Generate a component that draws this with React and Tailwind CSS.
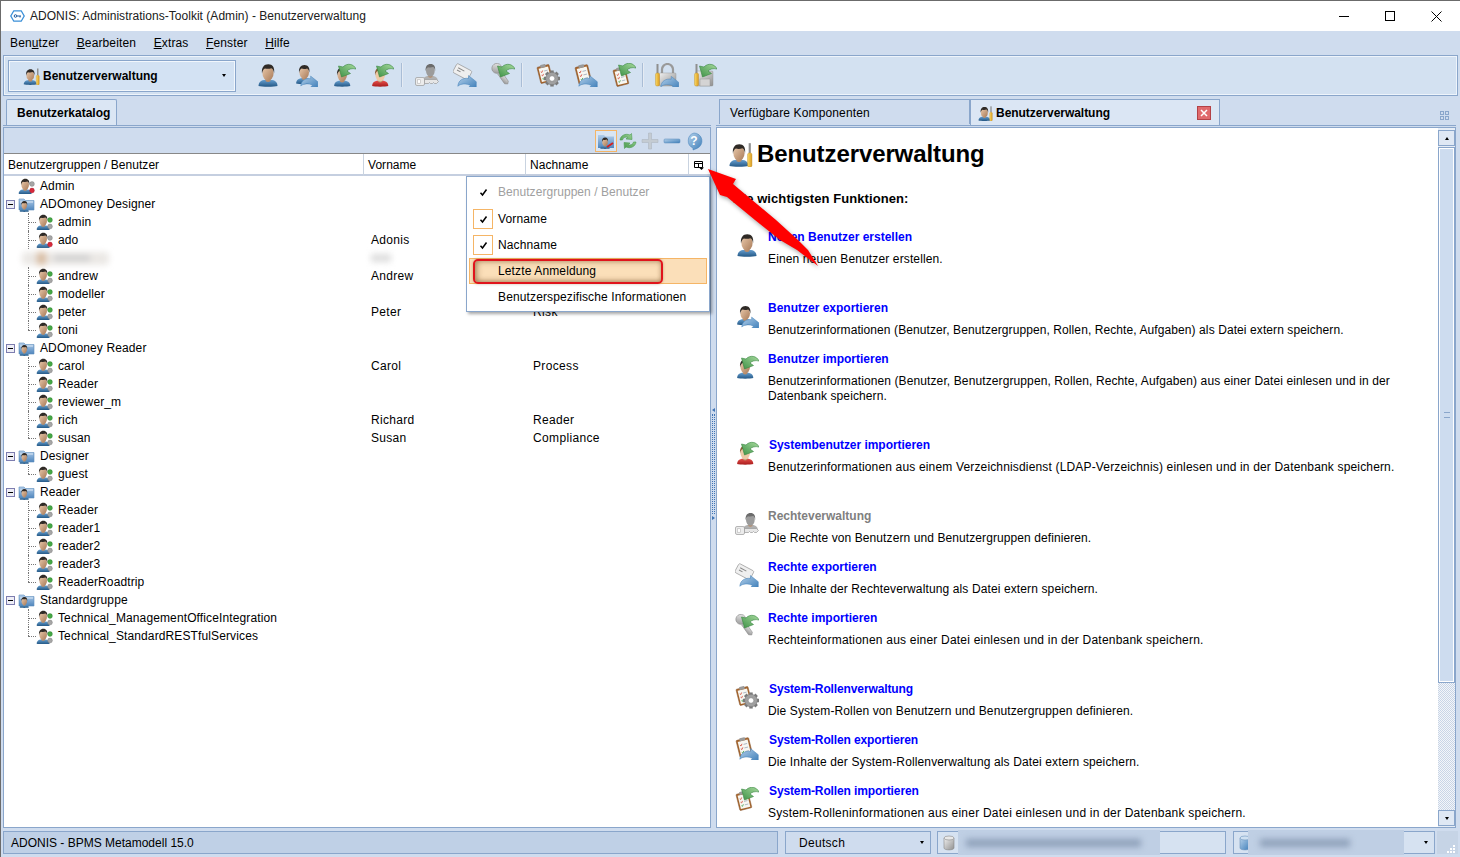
// App.jsx
import React from "react";

const FONT = "font-['Liberation_Sans',Arial,sans-serif]";

function Defs() {
  return (
    <svg width="0" height="0" className="absolute">
      <defs>
        <linearGradient id="skin" x1="0" y1="0" x2="1" y2="1">
          <stop offset="0" stopColor="#ecccae" />
          <stop offset="1" stopColor="#a87a58" />
        </linearGradient>
        <linearGradient id="shirtBlue" x1="0" y1="0" x2="0" y2="1">
          <stop offset="0" stopColor="#6aa2d2" />
          <stop offset="1" stopColor="#235785" />
        </linearGradient>
        <linearGradient id="shirtRed" x1="0" y1="0" x2="0" y2="1">
          <stop offset="0" stopColor="#e8504c" />
          <stop offset="1" stopColor="#a81c1c" />
        </linearGradient>
        <linearGradient id="green" x1="1" y1="0" x2="0" y2="1">
          <stop offset="0" stopColor="#a6d99c" />
          <stop offset="1" stopColor="#3d9146" />
        </linearGradient>
        <linearGradient id="blueArrow" x1="0" y1="0" x2="1" y2="1">
          <stop offset="0" stopColor="#b4d0ea" />
          <stop offset="1" stopColor="#3f7fb9" />
        </linearGradient>
        <linearGradient id="steel" x1="0" y1="0" x2="1" y2="1">
          <stop offset="0" stopColor="#f0f0f0" />
          <stop offset="1" stopColor="#909090" />
        </linearGradient>
        <linearGradient id="yellow" x1="0" y1="0" x2="1" y2="0">
          <stop offset="0" stopColor="#f9da68" />
          <stop offset="1" stopColor="#dc9c20" />
        </linearGradient>
        <linearGradient id="folder" x1="0" y1="0" x2="0" y2="1">
          <stop offset="0" stopColor="#b2cdea" />
          <stop offset="1" stopColor="#4f86bd" />
        </linearGradient>
      </defs>
    </svg>
  );
}

// head and shoulders, drawn in a 24 box
function Bust({ shirt = "url(#shirtBlue)", hair = "#2f2a26", skin = "url(#skin)", x = 0, y = 0, k = 1 }) {
  return (
    <g transform={`translate(${x} ${y}) scale(${k})`}>
      <path d="M2.500 23c0-4.500 3.500-6.500 9.500-6.500s9.500 2 9.500 6.500c-3 1-16 1-19 0z" fill={shirt} />
      <path d="M9.500 14h5v4c-1.500 1.200-3.500 1.200-5 0z" fill="#b98c68" />
      <ellipse cx="12" cy="10" rx="5.600" ry="7.600" fill={skin} />
      <path d="M6 10.500C5.200 4.500 8 1.200 12.300 1.200c4.200 0 6.600 3.200 5.800 9-.4-2.600-1.200-4.200-2.600-5-2.200.8-5 .8-6.600.2C7.200 6.300 6.400 8 6 10.500z" fill={hair} />
    </g>
  );
}

function GreenArrow({ x = 0, y = 0, k = 1 }) {
  return (
    <path
      transform={`translate(${x} ${y}) scale(${k})`}
      d="M24 6C22 1 15-.5 11 4L6.500 3 9.500 14 18.500 10.500 15 8C17 6 20 5 24 6z"
      fill="url(#green)"
      stroke="#37873f"
      strokeWidth=".6"
    />
  );
}

function BlueArrow({ x = 0, y = 0, k = 1 }) {
  return (
    <path
      transform={`translate(${x} ${y}) scale(${k})`}
      d="M1 21C1.500 14 7 10.500 14 11.500V8L23.500 15.500 23.500 23.500H13L16.500 20C11 17.500 5 17.500 1 21z"
      fill="url(#blueArrow)"
      stroke="#3f7fb9"
      strokeWidth=".6"
    />
  );
}

function Clipboard({ x = 0, y = 0, k = 1 }) {
  return (
    <g transform={`translate(${x} ${y}) scale(${k}) rotate(-14 10 12)`}>
      <rect x="3" y="3" width="14" height="19" rx="1" fill="#a8672f" stroke="#7c4a20" strokeWidth=".5" />
      <rect x="4.500" y="5" width="11" height="15.500" fill="#f7f7f2" />
      <rect x="7" y="1.500" width="6" height="3.500" rx=".6" fill="#9a9a9a" />
      <path d="M6 9l1 1 1.500-2M6 13l1 1 1.500-2" fill="none" stroke="#d04030" strokeWidth=".8" />
      <path d="M6 17l1 1 1.500-2" fill="none" stroke="#3a9a40" strokeWidth=".8" />
      <path d="M10 9h4M10 13h4M10 17h4" stroke="#9aa7b8" strokeWidth=".8" />
    </g>
  );
}

function Gear({ x = 0, y = 0, k = 1 }) {
  const teeth = [0, 45, 90, 135];
  return (
    <g transform={`translate(${x} ${y}) scale(${k})`}>
      {teeth.map((a) => (
        <rect key={a} x="-1.500" y="-7" width="3" height="14" fill="#7b7b7b" transform={`rotate(${a})`} />
      ))}
      <circle r="5.500" fill="#a0a0a0" stroke="#6f6f6f" strokeWidth=".4" />
      <circle r="2.400" fill="#fff" stroke="#6f6f6f" strokeWidth=".4" />
    </g>
  );
}

function Padlock({ x = 0, y = 0 }) {
  return (
    <g transform={`translate(${x} ${y})`}>
      <path d="M6 11V6.500a5.500 5.500 0 0 1 11 0V11" fill="none" stroke="#9a9a9a" strokeWidth="2.200" />
      <rect x="3" y="10" width="17" height="13" rx="1" fill="url(#steel)" stroke="#8d8d8d" strokeWidth=".4" />
    </g>
  );
}

function Screwdriver({ x = 0, y = 0 }) {
  return (
    <g transform={`translate(${x} ${y})`}>
      <rect x="1.500" y="0" width="2" height="9" fill="#8f8f8f" />
      <rect x=".500" y="9" width="4" height="13" rx="1.500" fill="url(#yellow)" stroke="#b9861e" strokeWidth=".4" />
    </g>
  );
}

function Ico({ size = 24, children, className = "" }) {
  return (
    <svg width={size} height={size} viewBox="0 0 24 24" className={`shrink-0 ${className}`}>
      {children}
    </svg>
  );
}

const UserIcon = ({ size }) => (
  <Ico size={size}>
    <Bust />
  </Ico>
);
const UserExportIcon = ({ size }) => (
  <Ico size={size}>
    <Bust k={0.85} x={0} y={1} />
    <BlueArrow x={6} y={7} k={0.76} />
  </Ico>
);
const UserImportIcon = ({ size }) => (
  <Ico size={size}>
    <Bust k={0.85} x={0} y={3.500} />
    <GreenArrow x={0} y={0} k={1} />
  </Ico>
);
const SysUserImportIcon = ({ size }) => (
  <Ico size={size}>
    <Bust k={0.85} x={0} y={3.500} shirt="url(#shirtRed)" hair="#8a5a34" skin="#edc9a6" />
    <GreenArrow x={0} y={0} k={1} />
  </Ico>
);
const RightsIcon = ({ size }) => (
  <Ico size={size}>
    <Bust x={6} y={0} k={0.78} shirt="#b0b0b0" hair="#6b6b6b" skin="#9c9c9c" />
    <rect x=".500" y="14.500" width="9" height="8" rx="1.500" fill="#ececec" stroke="#9a9a9a" strokeWidth=".7" />
    <rect x="2.500" y="16.800" width="3" height="3.400" fill="#fff" stroke="#aaa" strokeWidth=".5" />
    <path d="M9.500 16.500h12l2 2-2 2h-2l-1-1-1 1h-2l-1-1-1 1h-4z" fill="#e6e6e6" stroke="#9a9a9a" strokeWidth=".7" />
  </Ico>
);
const TagExportIcon = ({ size }) => (
  <Ico size={size}>
    <g transform="rotate(28 8 8)">
      <rect x="1" y="3" width="17" height="10" rx="1.500" fill="#efefef" stroke="#8d8d8d" strokeWidth=".6" />
      <path d="M4 6.500h7M4 9h4" stroke="#888" strokeWidth="1" />
    </g>
    <BlueArrow x={4} y={6} k={0.82} />
  </Ico>
);
const KeyImportIcon = ({ size }) => (
  <Ico size={size}>
    <g transform="rotate(55 7 7)">
      <circle cx="5" cy="7" r="5" fill="url(#steel)" stroke="#8d8d8d" strokeWidth=".6" />
      <path d="M10 5h12l2 2-2 2.500H10z" fill="url(#steel)" stroke="#8d8d8d" strokeWidth=".6" />
    </g>
    <GreenArrow x={0} y={0} k={1} />
  </Ico>
);
const RoleIcon = ({ size }) => (
  <Ico size={size}>
    <Clipboard x={0} y={0} k={0.88} />
    <Gear x={16} y={15.500} k={1.150} />
  </Ico>
);
const RoleExportIcon = ({ size }) => (
  <Ico size={size}>
    <Clipboard x={0} y={0} k={0.92} />
    <BlueArrow x={4} y={6} k={0.82} />
  </Ico>
);
const RoleImportIcon = ({ size }) => (
  <Ico size={size}>
    <Clipboard x={0} y={3} k={0.88} />
    <GreenArrow x={0} y={-1} k={1} />
  </Ico>
);
const LockExportIcon = ({ size }) => (
  <Ico size={size}>
    <Padlock x={1} y={0} />
    <Screwdriver x={0} y={1} />
    <BlueArrow x={5} y={7} k={0.8} />
  </Ico>
);
const LockImportIcon = ({ size }) => (
  <Ico size={size}>
    <rect x="3" y="8" width="17" height="15" rx="1" fill="url(#steel)" stroke="#8d8d8d" strokeWidth=".4" />
    <rect x="7" y="16" width="10" height="7" fill="#d4d4d4" stroke="#8d8d8d" strokeWidth=".4" />
    <Screwdriver x={1} y={1} />
    <GreenArrow x={0} y={0} k={1} />
  </Ico>
);
const AdminIcon = ({ size }) => (
  <Ico size={size}>
    <Bust k={0.92} x={0} y={2} />
    <Screwdriver x={18.500} y={2} />
  </Ico>
);

// the small tree icon with its two status dots
function TreeUser({ admin }) {
  return (
    <svg width="18" height="16" viewBox="0 0 18 16" className="shrink-0">
      <g transform="translate(-1 0) scale(.68)">
        <Bust />
      </g>
      <circle cx="14" cy="6" r="2.400" fill={admin ? "#a6a6a6" : "#45a845"} stroke={admin ? "#777" : "#2c7c2c"} strokeWidth=".4" />
      <circle cx="14" cy="12.500" r="2.400" fill={admin ? "#d8283a" : "#a6a6a6"} stroke={admin ? "#9c1a28" : "#777"} strokeWidth=".4" />
    </svg>
  );
}

function TreeGroup() {
  return (
    <svg width="17" height="16" viewBox="0 0 17 16" className="shrink-0">
      <path d="M1 3h5l1.500 1.500H16v9.500H1z" fill="url(#folder)" stroke="#5f8fbe" strokeWidth=".6" />
      <path d="M2 6h13" stroke="#dbe8f6" strokeWidth="1" />
      <g transform="translate(.5 4.500) scale(.48)">
        <Bust />
      </g>
    </svg>
  );
}

const TREE = [
  { t: "u", n: "Admin", admin: true },
  { t: "g", n: "ADOmoney Designer" },
  { t: "c", n: "admin" },
  { t: "c", n: "ado", v: "Adonis", admin: true },
  { t: "b" },
  { t: "c", n: "andrew", v: "Andrew" },
  { t: "c", n: "modeller" },
  { t: "c", n: "peter", v: "Peter", s: "Risk" },
  { t: "c", n: "toni", last: true },
  { t: "g", n: "ADOmoney Reader" },
  { t: "c", n: "carol", v: "Carol", s: "Process" },
  { t: "c", n: "Reader" },
  { t: "c", n: "reviewer_m" },
  { t: "c", n: "rich", v: "Richard", s: "Reader" },
  { t: "c", n: "susan", v: "Susan", s: "Compliance", last: true },
  { t: "g", n: "Designer" },
  { t: "c", n: "guest", last: true },
  { t: "g", n: "Reader" },
  { t: "c", n: "Reader" },
  { t: "c", n: "reader1" },
  { t: "c", n: "reader2" },
  { t: "c", n: "reader3" },
  { t: "c", n: "ReaderRoadtrip", last: true },
  { t: "g", n: "Standardgruppe" },
  { t: "c", n: "Technical_ManagementOfficeIntegration" },
  { t: "c", n: "Technical_StandardRESTfulServices", last: true },
];

function Connector({ last }) {
  return (
    <span className="relative w-[18px] h-[18px] shrink-0">
      <span className={`absolute left-[10px] top-0 w-0 border-l border-dotted border-[#777] ${last ? "h-[9px]" : "h-[18px]"}`} />
      <span className="absolute left-[10px] top-[9px] w-[8px] h-0 border-t border-dotted border-[#777]" />
    </span>
  );
}

function TreeRow({ row }) {
  if (row.t === "b") {
    return (
      <div className="h-[18px] flex items-center relative">
        <div className="ml-[18px] w-[87px] h-[13px] bg-[#ebe8e5] blur-[3px] rounded-sm flex items-center pl-[15px]">
          <div className="w-[9px] h-[13px] bg-[#d9bda3]" />
          <div className="ml-[8px] w-[36px] h-[6px] bg-[#d0d0d0]" />
        </div>
        <div className="absolute left-[367px] top-[5px] w-[20px] h-[8px] bg-[#dddddd] blur-[3px]" />
      </div>
    );
  }
  return (
    <div className="h-[18px] flex items-center relative tracking-[0.12px]">
      {row.t === "g" && (
        <>
          <span className="w-[14px] flex justify-start pl-[2px] shrink-0">
            <span className="w-[9px] h-[9px] border border-[#7d7daf] bg-[#eeeef6] flex items-center justify-center shrink-0">
              <span className="w-[5px] h-px bg-black" />
            </span>
          </span>
          <TreeGroup />
          <span className="ml-[5px]">{row.n}</span>
        </>
      )}
      {row.t === "u" && (
        <>
          <span className="w-[14px] shrink-0" />
          <TreeUser admin={row.admin} />
          <span className="ml-[4px]">{row.n}</span>
        </>
      )}
      {row.t === "c" && (
        <>
          <span className="w-[14px] shrink-0" />
          <Connector last={row.last} />
          <TreeUser admin={row.admin} />
          <span className="ml-[4px]">{row.n}</span>
        </>
      )}
      {row.v && <span className="absolute left-[367px] tracking-[0.3px]">{row.v}</span>}
      {row.s && <span className="absolute left-[529px] tracking-[0.35px]">{row.s}</span>}
    </div>
  );
}

const HELP = [
  { I: UserIcon, t: "Neuen Benutzer erstellen", d: "Einen neuen Benutzer erstellen.", gap: true, tr: "tracking-[0.13px]" },
  { I: UserExportIcon, t: "Benutzer exportieren", d: "Benutzerinformationen (Benutzer, Benutzergruppen, Rollen, Rechte, Aufgaben) als Datei extern speichern.", tr: "tracking-[0.09px]" },
  { I: UserImportIcon, t: "Benutzer importieren", d: "Benutzerinformationen (Benutzer, Benutzergruppen, Rollen, Rechte, Aufgaben) aus einer Datei einlesen und in der Datenbank speichern.", gap: true, tr: "tracking-[0.11px]" },
  { I: SysUserImportIcon, t: "Systembenutzer importieren", d: "Benutzerinformationen aus einem Verzeichnisdienst (LDAP-Verzeichnis) einlesen und in der Datenbank speichern.", gap: true, wide: "tracking-[-0.04px]", tr: "tracking-[0.16px]" },
  { I: RightsIcon, t: "Rechteverwaltung", d: "Die Rechte von Benutzern und Benutzergruppen definieren.", off: true, tr: "tracking-[0.09px]" },
  { I: TagExportIcon, t: "Rechte exportieren", d: "Die Inhalte der Rechteverwaltung als Datei extern speichern.", tr: "tracking-[0.12px]" },
  { I: KeyImportIcon, t: "Rechte importieren", d: "Rechteinformationen aus einer Datei einlesen und in der Datenbank speichern.", gap: true, tr: "tracking-[0.21px]" },
  { I: RoleIcon, t: "System-Rollenverwaltung", d: "Die System-Rollen von Benutzern und Benutzergruppen definieren.", wide: "tracking-[-0.12px]", tr: "tracking-[0.11px]" },
  { I: RoleExportIcon, t: "System-Rollen exportieren", d: "Die Inhalte der System-Rollenverwaltung als Datei extern speichern.", wide: "tracking-[-0.12px]", tr: "tracking-[0.13px]" },
  { I: RoleImportIcon, t: "System-Rollen importieren", d: "System-Rolleninformationen aus einer Datei einlesen und in der Datenbank speichern.", wide: "tracking-[-0.12px]", tr: "tracking-[0.22px]" },
];

function HelpItem({ item }) {
  const { I } = item;
  return (
    <div className={`flex ${item.gap ? "mb-5" : ""}`}>
      <div className="w-[41px] shrink-0 pt-[3px] pl-[8px]">
        <I size={24} />
      </div>
      <div className="flex-1 pb-[14px]">
        <div className={`h-[15px] leading-[15px] font-bold ${item.wide ? `ml-px ${item.wide}` : ""} ${item.off ? "text-[#808080]" : "text-[#0000ff]"}`}>{item.t}</div>
        <div className={`mt-[7px] leading-[15px] text-black ${item.tr}`}>{item.d}</div>
      </div>
    </div>
  );
}

function Sep({ className }) {
  return <span className={`w-[2px] h-[24px] mb-[2px] bg-[#a9bdd6] border-r border-white/70 ${className}`} />;
}

function Menu({ children, u }) {
  const i = children.indexOf(u);
  return (
    <span className="mr-[17.6px] tracking-[0.13px]">
      {children.slice(0, i)}
      <span className="underline">{u}</span>
      {children.slice(i + 1)}
    </span>
  );
}

function Caret() {
  return <span className="w-0 h-0 border-x-[2.5px] border-x-transparent border-t-[3px] border-t-black" />;
}

function ColumnMenuRow({ checked, boxed, dim, className = "", children }) {
  return (
    <div className={`h-[26px] flex items-center ${dim ? "tracking-[0.05px]" : "tracking-[0.13px]"} ${className}`}>
      <span className={`w-[20px] h-[20px] ml-[6px] flex items-center justify-center ${boxed ? "border border-[#f5b566]" : ""}`}>
        {checked && (
          <svg width="9" height="9" viewBox="0 0 9 9">
            <path d="M1.500 4.800l2 2.200L7.500 1.500" fill="none" stroke="#000" strokeWidth="1.500" />
          </svg>
        )}
      </span>
      <span className={`ml-[5px] ${dim ? "text-[#a0a0a0]" : ""}`}>{children}</span>
    </div>
  );
}

function HeaderCell({ className, children }) {
  return (
    <div className={`h-[22px] pl-[4px] flex items-center border-r border-[#c9d3e0] tracking-[0.04px] ${className}`}>{children}</div>
  );
}

export default function App() {
  return (
    <div className={`${FONT} relative w-[1460px] h-[857px] overflow-hidden bg-[#cfdcee] text-[12px] text-black flex flex-col border-l border-t border-[#6b6b6b]`}>
      <Defs />

      {/* title bar */}
      <div className="h-[30px] bg-white flex items-center shrink-0">
        <svg width="15" height="14" viewBox="0 0 15 14" className="ml-[9px]">
          <path d="M3.800 1.800h7.400l3 5.200-3 5.200H3.800L.8 7z" fill="#fff" stroke="#3a8fd8" strokeWidth="1.300" />
          <circle cx="5.500" cy="7" r="1.300" fill="none" stroke="#1c5aa0" />
          <path d="M7 7h4M10 7v1.500" stroke="#1c5aa0" />
        </svg>
        <span className="ml-[5px] text-[#202020] tracking-[0.03px]">ADONIS: Administrations-Toolkit (Admin) - Benutzerverwaltung</span>
        <div className="ml-auto flex items-center">
          <span className="w-[46px] flex justify-center"><span className="w-[10px] h-px bg-black" /></span>
          <span className="w-[46px] flex justify-center"><span className="w-[10px] h-[10px] border border-black" /></span>
          <span className="w-[46px] flex justify-center mr-[1px]">
            <svg width="11" height="11" viewBox="0 0 11 11"><path d="M.5.5l10 10M10.500.5l-10 10" stroke="#000" /></svg>
          </span>
        </div>
      </div>

      {/* menu bar */}
      <div className="h-[24px] pl-[9px] flex items-center shrink-0">
        <Menu u="u">Benutzer</Menu>
        <Menu u="B">Bearbeiten</Menu>
        <Menu u="E">Extras</Menu>
        <Menu u="F">Fenster</Menu>
        <Menu u="H">Hilfe</Menu>
      </div>

      {/* toolbar */}
      <div className="h-[41px] mx-[2px] border border-[#8aa6cb] bg-[#d3e1f1] flex items-center shrink-0 shadow-[inset_0_0_0_1px_#eef4fb]">
        <div className="ml-[4px] w-[228px] h-[32px] border border-[#8aa6cb] bg-[#d3e2f3] shadow-[inset_0_0_0_1px_#f2f7fc] flex items-center pl-[13px] pr-[9px]">
          <AdminIcon size={18} />
          <span className="ml-[3px] font-bold flex-1">Benutzerverwaltung</span>
          <Caret />
        </div>
        <div className="ml-[20px] mb-[2px] flex items-center gap-[14px]">
          <UserIcon />
          <UserExportIcon />
          <UserImportIcon />
          <SysUserImportIcon />
        </div>
        <Sep className="ml-[7px]" />
        <div className="ml-[12px] mb-[2px] flex items-center gap-[14px]">
          <RightsIcon />
          <TagExportIcon />
          <KeyImportIcon />
        </div>
        <Sep className="ml-[6px]" />
        <div className="ml-[13px] mb-[2px] flex items-center gap-[14px]">
          <RoleIcon />
          <RoleExportIcon />
          <RoleImportIcon />
        </div>
        <Sep className="ml-[6px]" />
        <div className="ml-[11px] mb-[2px] flex items-center gap-[14px]">
          <LockExportIcon />
          <LockImportIcon />
        </div>
      </div>

      {/* two panes */}
      <div className="flex-1 min-h-0 flex pt-[3px]">
        {/* left pane */}
        <div className="w-[708px] ml-[2px] shrink-0 flex flex-col">
          <div className="h-[27px] flex items-end shrink-0 border-b border-[#8aa6cb]">
            <div className="ml-[3px] w-[111px] h-[26px] border border-b-0 border-[#8aa6cb] rounded-t-[2px] bg-[#dbe6f4] flex items-center font-bold pl-[10px] pt-[1px]">
              Benutzerkatalog
            </div>
          </div>
          <div className="mt-px flex-1 min-h-0 border border-[#8aa6cb] flex flex-col bg-white">
            <div className="h-[26px] shrink-0 bg-[#cfdcee] flex items-center justify-end pr-[6px] border-b border-[#888]">
              <span className="w-[22px] h-[22px] border border-[#f5b566] bg-[#d9e5f3] flex items-center justify-center">
                <svg width="18" height="18" viewBox="0 0 18 18">
                  <path d="M1 3h6l1.500 1.500H17V16H1z" fill="url(#folder)" />
                  <g transform="translate(2 5) scale(.5)"><Bust /></g>
                  <path d="M10 15l6-4" stroke="#d42020" strokeWidth="2" />
                </svg>
              </span>
              <svg width="20" height="20" viewBox="0 0 20 20" className="ml-[1px]">
                <path d="M2 9c.5-4.500 5.500-7 10-5l1.500-1.500.5 6-6-.5 1.700-1.700C7.500 5.500 4.500 7 4.500 9z M18 11c-.5 4.500-5.500 7-10 5l-1.500 1.500L6 11.500l6 .5-1.700 1.700c2.200 1 5.200-.7 5.200-2.700z" fill="url(#green)" stroke="#4a9a50" strokeWidth=".6" />
              </svg>
              <svg width="20" height="20" viewBox="0 0 20 20" className="ml-[2px]">
                <path d="M8.500 2h3v6.500H18v3h-6.500V18h-3v-6.500H2v-3h6.500z" fill="#c4cbd2" stroke="#a9b1ba" strokeWidth=".5" />
              </svg>
              <svg width="20" height="20" viewBox="0 0 20 20" className="ml-[2px]">
                <rect x="2" y="8" width="16" height="4" rx="1" fill="url(#blueArrow)" stroke="#5788b8" strokeWidth=".5" />
              </svg>
              <svg width="20" height="20" viewBox="0 0 20 20" className="ml-[2px]">
                <path d="M10 2a8 8 0 0 1 3 15.400L9 19v-2A8 8 0 0 1 10 2z" fill="url(#blueArrow)" stroke="#3f7fb9" strokeWidth=".5" />
                <text x="10" y="14" textAnchor="middle" fontSize="12" fontWeight="bold" fill="#fff">?</text>
              </svg>
            </div>
            <div className="h-[22px] shrink-0 flex bg-white border-b-2 border-[#c5cfe0] relative">
              <HeaderCell className="w-[360px]">Benutzergruppen / Benutzer</HeaderCell>
              <HeaderCell className="w-[162px]">Vorname</HeaderCell>
              <HeaderCell className="w-[162px] border-r-0">Nachname</HeaderCell>
              <div className="w-[21px] border-l border-[#c9d3e0] flex items-center justify-center pt-[1px]">
                <svg width="10" height="10" viewBox="0 0 10 10">
                  <path d="M.5 1.500h8v6h-8zM.5 3.500h8M4.500 3.500v4" fill="none" stroke="#000" />
                  <path d="M5 7.500h5L7.500 10z" fill="#000" />
                </svg>
              </div>
            </div>
            <div className="flex-1 min-h-0 pt-[1px]">
              {TREE.map((row, i) => (
                <TreeRow key={i} row={row} />
              ))}
            </div>
          </div>
        </div>

        {/* splitter */}
        <div className="w-[5px] shrink-0 flex flex-col items-center justify-center gap-[2px]">
          <span className="w-0 h-0 border-y-[2.5px] border-y-transparent border-r-[3px] border-r-[#3f74b5]" />
          <div className="w-[3px] h-[100px] border-x border-dotted border-[#3f74b5]" />
          <span className="w-0 h-0 border-y-[2.5px] border-y-transparent border-l-[3px] border-l-[#3f74b5]" />
        </div>

        {/* right pane */}
        <div className="w-[743px] shrink-0 flex flex-col">
          <div className="h-[27px] flex items-end shrink-0 relative border-b border-[#8aa6cb] mr-[3px]">
            <div className="w-[251px] h-[25px] ml-[3px] mb-px border border-b-0 border-[#8aa6cb] bg-[#cfdcee] flex items-center pl-[10px] pt-[1px] tracking-[0.14px]">Verfügbare Komponenten</div>
            <div className="w-[250px] h-[26px] border border-b-0 border-[#8aa6cb] bg-[#dbe6f4] flex items-center pl-[6px] font-bold">
              <AdminIcon size={16} />
              <span className="ml-[3px] flex-1 tracking-[-0.04px]">Benutzerverwaltung</span>
              <span className="w-[14px] h-[14px] mr-[8px] bg-[#e06a6c] border border-[#b34146] flex items-center justify-center">
                <svg width="8" height="8" viewBox="0 0 8 8"><path d="M1 1l6 6M7 1L1 7" stroke="#fff" strokeWidth="1.500" /></svg>
              </span>
            </div>
            <span className="ml-auto mr-[7px] mb-[5px] grid grid-cols-2 gap-px">
              <span className="w-[4px] h-[4px] border border-[#8aa6cb]" />
              <span className="w-[4px] h-[4px] border border-[#8aa6cb]" />
              <span className="w-[4px] h-[4px] border border-[#8aa6cb]" />
              <span className="w-[4px] h-[4px] border border-[#8aa6cb]" />
            </span>
          </div>
          <div className="mt-px flex-1 min-h-0 mr-[3px] border border-[#8aa6cb] bg-white flex">
            <div className="flex-1 min-w-0 pl-[10px] pr-[40px] pt-[10px] overflow-hidden">
              <div className="flex items-center h-[32px]">
                <AdminIcon size={26} />
                <span className="ml-[4px] text-[24px] font-bold leading-[32px] tracking-[-0.1px]">Benutzerverwaltung</span>
              </div>
              <div className="ml-[6px] mt-[21px] h-[15px] leading-[15px] text-[13px] font-bold tracking-[0.08px]">Die wichtigsten Funktionen:</div>
              <div className="mt-[24px]">
                {HELP.map((item) => (
                  <HelpItem key={item.t} item={item} />
                ))}
              </div>
            </div>
            {/* scrollbar */}
            <div className="w-[17px] shrink-0 flex flex-col bg-[#e6edf6]">
              <div className="h-[16px] mt-[2px] border border-[#8aa6cb] bg-[#dfe8f4] flex items-center justify-center">
                <span className="w-0 h-0 border-x-[2.5px] border-x-transparent border-b-[3px] border-b-black" />
              </div>
              <div className="h-[536px] mt-px border border-[#8aa6cb] bg-[#cddcef] shadow-[inset_0_0_0_1px_#fff] flex items-center justify-center">
                <span className="w-[6px] h-[6px] border-y border-[#8aa6cb]" />
              </div>
              <div className="flex-1 bg-[repeating-conic-gradient(#c9d5e6_0_25%,#f3f6fa_0_50%)] bg-[length:2px_2px]" />
              <div className="h-[16px] mb-px border border-[#8aa6cb] bg-[#dfe8f4] flex items-center justify-center">
                <Caret />
              </div>
            </div>
          </div>
        </div>
      </div>

      {/* status bar */}
      <div className="h-[29px] shrink-0 flex items-center pl-[2px]">
        <div className="w-[775px] shrink-0 h-[23px] border border-[#8aa6cb] bg-[#bfd0e6] pl-[7px] flex items-center">ADONIS - BPMS Metamodell 15.0</div>
        <div className="w-[146px] shrink-0 ml-[7px] h-[23px] border border-[#8aa6cb] bg-[#cfdcee] pl-[13px] pr-[6px] flex items-center justify-between tracking-[0.3px]">
          Deutsch
          <Caret />
        </div>
        <div className="w-[289px] shrink-0 ml-[6px] h-[23px] border border-[#8aa6cb] bg-[#d6e2f1] flex items-center relative pl-[5px]">
          <svg width="12" height="16" viewBox="0 0 12 16">
            <path d="M1 3v10c0 2.500 10 2.500 10 0V3z" fill="url(#steel)" stroke="#888" strokeWidth=".6" />
            <ellipse cx="6" cy="3" rx="5" ry="2" fill="#e8e8e8" stroke="#888" strokeWidth=".6" />
          </svg>
          <div className="absolute left-[20px] top-[-2px] w-[202px] h-[25px] bg-[#bfcfe4]" />
          <div className="absolute left-[28px] top-[7px] w-[175px] h-[8px] bg-[#8fa1ba] blur-[3px]" />
        </div>
        <div className="w-[202px] shrink-0 ml-[7px] h-[23px] border border-[#8aa6cb] bg-[#d6e2f1] flex items-center relative pl-[5px] pr-[6px]">
          <svg width="12" height="16" viewBox="0 0 12 16">
            <path d="M1 3v10c0 2.500 10 2.500 10 0V3z" fill="url(#blueArrow)" stroke="#6c93bd" strokeWidth=".6" />
            <ellipse cx="6" cy="3" rx="5" ry="2" fill="#cfe0f1" stroke="#6c93bd" strokeWidth=".6" />
          </svg>
          <div className="absolute left-[14px] top-[-2px] w-[156px] h-[25px] bg-[#bfcfe4]" />
          <div className="absolute left-[26px] top-[7px] w-[90px] h-[8px] bg-[#8fa1ba] blur-[3px]" />
          <span className="ml-auto flex"><Caret /></span>
        </div>
        <span className="ml-[2px] w-[21px] h-[23px] shrink-0 bg-[#c6d4e6] flex flex-col items-end justify-end gap-px pr-[3px] pb-[1px]">
          <span className="w-[2px] h-[2px] bg-white" />
          <span className="w-[5px] h-[2px] bg-[repeating-linear-gradient(90deg,#fff_0_2px,transparent_2px_3px)]" />
          <span className="w-[8px] h-[2px] bg-[repeating-linear-gradient(90deg,#fff_0_2px,transparent_2px_3px)]" />
        </span>
      </div>

      {/* column chooser popup */}
      <div className="absolute left-[465px] top-[175px] w-[244px] h-[136px] bg-white border border-[#8aa6cb] shadow-[2px_2px_3px_rgba(0,0,0,0.35)] pt-[2px]">
        <ColumnMenuRow checked dim className="mb-px">Benutzergruppen / Benutzer</ColumnMenuRow>
        <ColumnMenuRow checked boxed>Vorname</ColumnMenuRow>
        <ColumnMenuRow checked boxed>Nachname</ColumnMenuRow>
        <div className="relative h-[26px] mx-[2px] bg-[#fbdfb9] border border-[#f5b566] pl-[28px] flex items-center tracking-[0.13px]">
          Letzte Anmeldung
          <div className="absolute left-[3px] top-[0px] w-[190px] h-[25px] border-2 border-[#e0141c] rounded-[5px] shadow-[inset_2px_0_6px_rgba(120,80,40,0.55),inset_0_-1px_4px_rgba(120,80,40,0.35),0_0_3px_rgba(120,80,40,0.4)]" />
        </div>
        <ColumnMenuRow>Benutzerspezifische Informationen</ColumnMenuRow>
      </div>

      {/* annotation arrow */}
      <svg width="1460" height="857" viewBox="0 0 1460 857" className="absolute left-[-1px] top-[-1px] pointer-events-none">
        <polygon points="708,169 736,179 733,184 776,220 798,240 808,250 818,266 797,250 780,240 755,220 727,197 720,195" fill="#ff0000" style={{ filter: "drop-shadow(1px 2px 2px rgba(0,0,0,.35))" }} />
      </svg>
    </div>
  );
}
